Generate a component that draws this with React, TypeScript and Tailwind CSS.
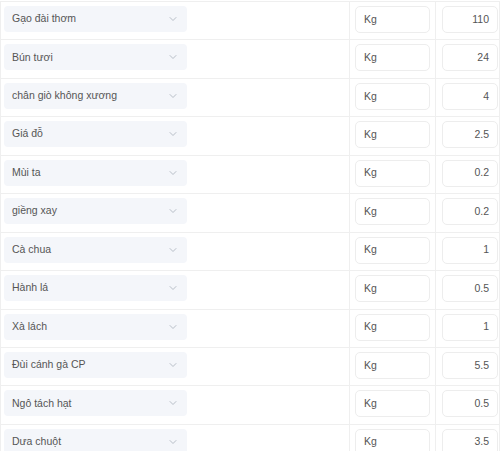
import { ChevronDown } from "lucide-react";

const rows = [
  { name: "Gạo đài thơm", unit: "Kg", qty: "110" },
  { name: "Bún tươi", unit: "Kg", qty: "24" },
  { name: "chân giò không xương", unit: "Kg", qty: "4" },
  { name: "Giá đỗ", unit: "Kg", qty: "2.5" },
  { name: "Mùi ta", unit: "Kg", qty: "0.2" },
  { name: "giềng xay", unit: "Kg", qty: "0.2" },
  { name: "Cà chua", unit: "Kg", qty: "1" },
  { name: "Hành lá", unit: "Kg", qty: "0.5" },
  { name: "Xà lách", unit: "Kg", qty: "1" },
  { name: "Đùi cánh gà CP", unit: "Kg", qty: "5.5" },
  { name: "Ngô tách hạt", unit: "Kg", qty: "0.5" },
  { name: "Dưa chuột", unit: "Kg", qty: "3.5" },
];

const App = () => {
  return (
    <div className="w-[500px] h-[451px] overflow-hidden bg-white pt-[1px] font-['Liberation_Sans',Arial,sans-serif] text-[10.5px] text-[#555]">
      <div className="border-l border-[#efefef]">
        {rows.map((r) => (
          <div key={r.name} className="grid grid-cols-[348px_86px_65px] h-[38.45px] border-t border-[#efefef]">
            {/* Product select */}
            <div className="pl-[3px] pt-[4px]">
              <div className="w-[183px] h-[26px] rounded-[4px] bg-[#f4f6fa] flex items-center justify-between pl-[8px] pr-[8px]">
                <span>{r.name}</span>
                <ChevronDown size={12} strokeWidth={1.5} className="text-[#a3abb5]" />
              </div>
            </div>
            {/* Unit */}
            <div className="border-l border-[#efefef] pl-[5px] pt-[4px]">
              <div className="w-[75px] h-[27px] rounded-[5px] border border-[#ededed] flex items-center pl-[8px]">
                {r.unit}
              </div>
            </div>
            {/* Quantity */}
            <div className="border-l border-[#efefef] border-r pl-[6px] pt-[4px]">
              <div className="w-[56px] h-[27px] rounded-[5px] border border-[#ededed] flex items-center justify-end pr-[8px]">
                {r.qty}
              </div>
            </div>
          </div>
        ))}
      </div>
    </div>
  );
};

export default App;
